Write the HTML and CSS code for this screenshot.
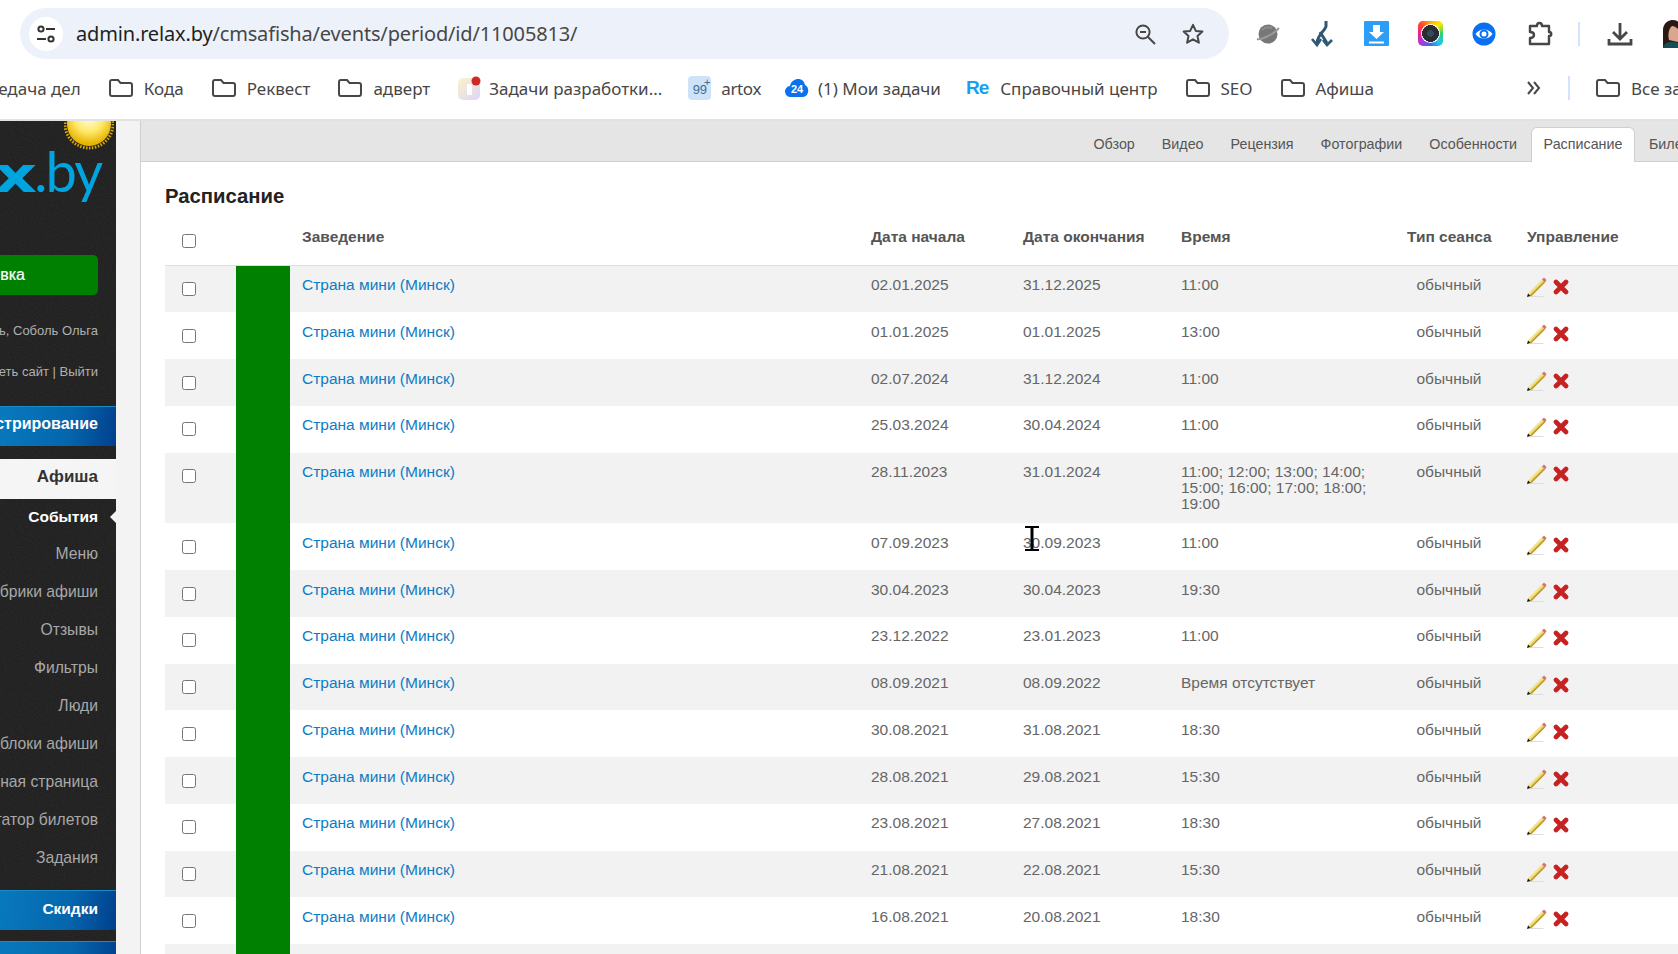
FILE: index.html
```html
<!DOCTYPE html>
<html lang="ru">
<head>
<meta charset="utf-8">
<title>Расписание</title>
<link rel="stylesheet" href="styles.css">
</head>
<body>
<header class="chrome">
  <div class="toolbar">
    <div class="omnibox">
      <span class="site-btn">
        <svg width="22" height="22" viewBox="0 0 22 22" fill="none" stroke="#333" stroke-width="2"><circle cx="6" cy="6" r="2.6"/><path d="M11 6h9M2 16h9"/><circle cx="16" cy="16" r="2.6"/></svg>
      </span>
      <span class="url"><b class="host">admin.relax.by</b>/cmsafisha/events/period/id/11005813/</span>
      <span class="omni-icons">
        <svg width="24" height="24" viewBox="0 0 24 24" fill="none" stroke="#474747" stroke-width="2"><circle cx="10" cy="10" r="6.6"/><path d="M7 10h6M15 15l7 7"/></svg>
        <svg width="24" height="24" viewBox="0 0 24 24" fill="none" stroke="#474747" stroke-width="2" stroke-linejoin="round"><path d="M12 2.8l2.8 6.1 6.6.7-4.9 4.5 1.4 6.6-5.9-3.4-5.9 3.4 1.4-6.6-4.9-4.500 6.6-.7z"/></svg>
      </span>
    </div>
    <div class="ext-list">
      <span class="ext"><svg width="26" height="26" viewBox="0 0 26 26"><circle cx="13" cy="13" r="9.5" fill="#777"/><path d="M2 18c4 1 16-4 22-11" fill="none" stroke="#999" stroke-width="2"/><path d="M7 9c3-3 7-3 10-2" fill="none" stroke="#8d8d8d" stroke-width="2"/></svg></span>
      <span class="ext"><svg width="26" height="28" viewBox="0 0 26 28" fill="none" stroke="#2f5873" stroke-width="3"><path d="M17 1v5c0 4-9 9-9 17"/><path d="M11 12l7 11"/><path d="M3 19l5 6 4-6M14 20l4 5 5-5" stroke-width="2.6"/></svg></span>
      <span class="ext"><svg width="25" height="25" viewBox="0 0 25 25"><rect width="25" height="25" rx="1" fill="#2e9df5"/><path d="M9 4h7v7h4l-7.500 7L5 11h4z" fill="#fff"/><path d="M5 20.500h15v2H5z" fill="#fff"/></svg></span>
      <span class="ext"><span class="camera"><span class="camera-lens"></span></span></span>
      <span class="ext"><svg width="24" height="24" viewBox="0 0 24 24"><circle cx="12" cy="12" r="11.500" fill="#0b6ff2"/><path d="M3.500 12c4-6 13-6 17 0-4 6-13 6-17 0z" fill="#fff"/><circle cx="12" cy="12" r="3.500" fill="none" stroke="#0b6ff2" stroke-width="2"/></svg></span>
      <span class="ext ext-puzzle"><svg width="26" height="26" viewBox="0 0 26 26" fill="none" stroke="#474747" stroke-width="2.400" stroke-linejoin="round"><path d="M3 5h7c0-4 5-4 5 0h7v6c3 0 3 4 0 4v8H3v-6c3 0 4-1.500 4-3s-1-3-4-3z"/></svg></span>
    </div>
    <span class="sep sep-toolbar"></span>
    <span class="dl"><svg width="26" height="26" viewBox="0 0 26 26" fill="none" stroke="#474747" stroke-width="2.800"><path d="M13 2v15M6 11l7 7 7-7"/><path d="M2 18v5h22v-5"/></svg></span>
    <span class="avatar"><svg width="15" height="28" viewBox="0 0 15 28"><path d="M0 28V9C1 2 6 0 10 0c3 0 5 1 5 2v26z" fill="#2b1a14"/><path d="M6 20c-1-4-1-11 3-14 2 0 4 1 6 3v13z" fill="#d9a78e"/><path d="M0 28c1-4 4-6 8-6 3 0 5 0 7 1v5z" fill="#174f58"/></svg></span>
  </div>
  <nav class="bookmarks">
    <span class="bm bm-first">Передача дел</span>
    <span class="bm"><svg class="folder" viewBox="0 0 24 18"><path d="M1 3a2 2 0 0 1 2-2h6l2.500 3H21a2 2 0 0 1 2 2v9a2 2 0 0 1-2 2H3a2 2 0 0 1-2-2z"/></svg>Кода</span>
    <span class="bm"><svg class="folder" viewBox="0 0 24 18"><path d="M1 3a2 2 0 0 1 2-2h6l2.500 3H21a2 2 0 0 1 2 2v9a2 2 0 0 1-2 2H3a2 2 0 0 1-2-2z"/></svg>Реквест</span>
    <span class="bm"><svg class="folder" viewBox="0 0 24 18"><path d="M1 3a2 2 0 0 1 2-2h6l2.500 3H21a2 2 0 0 1 2 2v9a2 2 0 0 1-2 2H3a2 2 0 0 1-2-2z"/></svg>адверт</span>
    <span class="bm"><svg class="fav" width="23" height="24" viewBox="0 0 23 24"><defs><linearGradient id="tg" x1="0" y1="0" x2="1" y2="1"><stop offset="0" stop-color="#fbf4c8"/><stop offset="1" stop-color="#dcd4fa"/></linearGradient></defs><rect y="2" width="22" height="22" rx="5" fill="url(#tg)"/><rect x="9" y="8" width="5" height="11" fill="#fff"/><circle cx="18" cy="5" r="4.500" fill="#cc2a22"/></svg>Задачи разработки...</span>
    <span class="bm"><span class="badge99">99<i class="plus">+</i></span><span class="latin">artox</span></span>
    <span class="bm"><svg class="fav-cloud" width="24" height="20" viewBox="0 0 24 20"><path d="M6 19a5.500 5.500 0 0 1-1-11C6 3 10 1 13 1c4 0 6 2 7 6 5 2 4 12-2 12z" fill="#0b72ee"/><text x="12" y="15" text-anchor="middle" class="fav-text">24</text></svg>(1) Мои задачи</span>
    <span class="bm"><span class="re">Re</span>Справочный центр</span>
    <span class="bm"><svg class="folder" viewBox="0 0 24 18"><path d="M1 3a2 2 0 0 1 2-2h6l2.500 3H21a2 2 0 0 1 2 2v9a2 2 0 0 1-2 2H3a2 2 0 0 1-2-2z"/></svg>SEO</span>
    <span class="bm"><svg class="folder" viewBox="0 0 24 18"><path d="M1 3a2 2 0 0 1 2-2h6l2.500 3H21a2 2 0 0 1 2 2v9a2 2 0 0 1-2 2H3a2 2 0 0 1-2-2z"/></svg>Афиша</span>
    <span class="bm-end">
      <svg class="chev" width="16" height="16" viewBox="0 0 16 16" fill="none" stroke="#474747" stroke-width="2"><path d="M2 2l5 6-5 6M8 2l5 6-5 6"/></svg>
      <span class="sep"></span>
      <span class="bm"><svg class="folder" viewBox="0 0 24 18"><path d="M1 3a2 2 0 0 1 2-2h6l2.500 3H21a2 2 0 0 1 2 2v9a2 2 0 0 1-2 2H3a2 2 0 0 1-2-2z"/></svg>Все закладки</span>
    </span>
  </nav>
</header>

<div class="page">
  <aside class="sidebar">
    <div class="logo">
      <svg class="sun" width="50" height="46" viewBox="0 0 50 46"><defs><radialGradient id="sg" cx=".5" cy=".35" r=".6"><stop offset="0" stop-color="#fffde0"/><stop offset=".55" stop-color="#ffe96a"/><stop offset="1" stop-color="#e8b400"/></radialGradient></defs><circle cx="25" cy="3" r="24" fill="none" stroke="#d9a800" stroke-width="3" stroke-dasharray="1.500 1.500"/><circle cx="25" cy="3" r="22" fill="url(#sg)"/></svg>
      <span class="logo-text"><b>relax</b>.by</span>
    </div>
    <div class="add-btn"><span>Заявка</span></div>
    <div class="user-line">Добрый день, Соболь Ольга</div>
    <div class="user-line user-line-2">Посмотреть сайт | Выйти</div>
    <div class="blue-bar">Администрирование</div>
    <div class="menu-head">Афиша</div>
    <ul class="menu">
      <li class="menu-active">События</li>
      <li>Меню</li>
      <li>Рубрики афиши</li>
      <li>Отзывы</li>
      <li>Фильтры</li>
      <li>Люди</li>
      <li>Подблоки афиши</li>
      <li>Главная страница</li>
      <li>Агрегатор билетов</li>
      <li>Задания</li>
    </ul>
    <div class="blue-bar blue-bar-discount">Скидки</div>
    <div class="blue-bar blue-bar-last"></div>
  </aside>
  <div class="gutter"></div>
  <main class="main">
    <nav class="tabs">
      <a class="tab">Обзор</a>
      <a class="tab">Видео</a>
      <a class="tab">Рецензия</a>
      <a class="tab">Фотографии</a>
      <a class="tab">Особенности</a>
      <a class="tab tab-active">Расписание</a>
      <a class="tab">Билеты</a>
    </nav>
    <h1 class="title">Расписание</h1>
    <table class="grid">
      <colgroup><col class="c-check"><col class="c-status"><col class="c-place"><col class="c-start"><col class="c-end"><col class="c-time"><col class="c-type"><col class="c-ctl"></colgroup>
      <thead>
        <tr><th class="cell-check"><input type="checkbox"></th><th></th><th class="pad">Заведение</th><th>Дата начала</th><th>Дата окончания</th><th>Время</th><th>Тип сеанса</th><th>Управление</th></tr>
      </thead>
      <tbody id="rows">
      <tr><td class="cell-check"><input type="checkbox"></td><td class="status"></td><td class="pad"><a class="link">Страна мини (Минск)</a></td><td>02.01.2025</td><td>31.12.2025</td><td>11:00</td><td class="type">обычный</td><td class="ctl"><svg class="ic-edit" viewBox="0 0 20 20"><use href="#pencil"/></svg><svg class="ic-del" viewBox="0 0 16 16"><use href="#cross"/></svg></td></tr>
      <tr><td class="cell-check"><input type="checkbox"></td><td class="status"></td><td class="pad"><a class="link">Страна мини (Минск)</a></td><td>01.01.2025</td><td>01.01.2025</td><td>13:00</td><td class="type">обычный</td><td class="ctl"><svg class="ic-edit" viewBox="0 0 20 20"><use href="#pencil"/></svg><svg class="ic-del" viewBox="0 0 16 16"><use href="#cross"/></svg></td></tr>
      <tr><td class="cell-check"><input type="checkbox"></td><td class="status"></td><td class="pad"><a class="link">Страна мини (Минск)</a></td><td>02.07.2024</td><td>31.12.2024</td><td>11:00</td><td class="type">обычный</td><td class="ctl"><svg class="ic-edit" viewBox="0 0 20 20"><use href="#pencil"/></svg><svg class="ic-del" viewBox="0 0 16 16"><use href="#cross"/></svg></td></tr>
      <tr><td class="cell-check"><input type="checkbox"></td><td class="status"></td><td class="pad"><a class="link">Страна мини (Минск)</a></td><td>25.03.2024</td><td>30.04.2024</td><td>11:00</td><td class="type">обычный</td><td class="ctl"><svg class="ic-edit" viewBox="0 0 20 20"><use href="#pencil"/></svg><svg class="ic-del" viewBox="0 0 16 16"><use href="#cross"/></svg></td></tr>
      <tr class="row-tall"><td class="cell-check"><input type="checkbox"></td><td class="status"></td><td class="pad"><a class="link">Страна мини (Минск)</a></td><td>28.11.2023</td><td>31.01.2024</td><td class="times">11:00; 12:00; 13:00; 14:00; 15:00; 16:00; 17:00; 18:00; 19:00</td><td class="type">обычный</td><td class="ctl"><svg class="ic-edit" viewBox="0 0 20 20"><use href="#pencil"/></svg><svg class="ic-del" viewBox="0 0 16 16"><use href="#cross"/></svg></td></tr>
      <tr><td class="cell-check"><input type="checkbox"></td><td class="status"></td><td class="pad"><a class="link">Страна мини (Минск)</a></td><td>07.09.2023</td><td class="cursor-cell">30.09.2023<svg class="ibeam" width="16" height="25" viewBox="0 0 16 25" fill="none" stroke="#000" stroke-width="2"><path d="M1 1h14M1 24h14"/><path d="M8 1v23" stroke-width="3"/></svg></td><td>11:00</td><td class="type">обычный</td><td class="ctl"><svg class="ic-edit" viewBox="0 0 20 20"><use href="#pencil"/></svg><svg class="ic-del" viewBox="0 0 16 16"><use href="#cross"/></svg></td></tr>
      <tr><td class="cell-check"><input type="checkbox"></td><td class="status"></td><td class="pad"><a class="link">Страна мини (Минск)</a></td><td>30.04.2023</td><td>30.04.2023</td><td>19:30</td><td class="type">обычный</td><td class="ctl"><svg class="ic-edit" viewBox="0 0 20 20"><use href="#pencil"/></svg><svg class="ic-del" viewBox="0 0 16 16"><use href="#cross"/></svg></td></tr>
      <tr><td class="cell-check"><input type="checkbox"></td><td class="status"></td><td class="pad"><a class="link">Страна мини (Минск)</a></td><td>23.12.2022</td><td>23.01.2023</td><td>11:00</td><td class="type">обычный</td><td class="ctl"><svg class="ic-edit" viewBox="0 0 20 20"><use href="#pencil"/></svg><svg class="ic-del" viewBox="0 0 16 16"><use href="#cross"/></svg></td></tr>
      <tr><td class="cell-check"><input type="checkbox"></td><td class="status"></td><td class="pad"><a class="link">Страна мини (Минск)</a></td><td>08.09.2021</td><td>08.09.2022</td><td>Время отсутствует</td><td class="type">обычный</td><td class="ctl"><svg class="ic-edit" viewBox="0 0 20 20"><use href="#pencil"/></svg><svg class="ic-del" viewBox="0 0 16 16"><use href="#cross"/></svg></td></tr>
      <tr><td class="cell-check"><input type="checkbox"></td><td class="status"></td><td class="pad"><a class="link">Страна мини (Минск)</a></td><td>30.08.2021</td><td>31.08.2021</td><td>18:30</td><td class="type">обычный</td><td class="ctl"><svg class="ic-edit" viewBox="0 0 20 20"><use href="#pencil"/></svg><svg class="ic-del" viewBox="0 0 16 16"><use href="#cross"/></svg></td></tr>
      <tr><td class="cell-check"><input type="checkbox"></td><td class="status"></td><td class="pad"><a class="link">Страна мини (Минск)</a></td><td>28.08.2021</td><td>29.08.2021</td><td>15:30</td><td class="type">обычный</td><td class="ctl"><svg class="ic-edit" viewBox="0 0 20 20"><use href="#pencil"/></svg><svg class="ic-del" viewBox="0 0 16 16"><use href="#cross"/></svg></td></tr>
      <tr><td class="cell-check"><input type="checkbox"></td><td class="status"></td><td class="pad"><a class="link">Страна мини (Минск)</a></td><td>23.08.2021</td><td>27.08.2021</td><td>18:30</td><td class="type">обычный</td><td class="ctl"><svg class="ic-edit" viewBox="0 0 20 20"><use href="#pencil"/></svg><svg class="ic-del" viewBox="0 0 16 16"><use href="#cross"/></svg></td></tr>
      <tr><td class="cell-check"><input type="checkbox"></td><td class="status"></td><td class="pad"><a class="link">Страна мини (Минск)</a></td><td>21.08.2021</td><td>22.08.2021</td><td>15:30</td><td class="type">обычный</td><td class="ctl"><svg class="ic-edit" viewBox="0 0 20 20"><use href="#pencil"/></svg><svg class="ic-del" viewBox="0 0 16 16"><use href="#cross"/></svg></td></tr>
      <tr><td class="cell-check"><input type="checkbox"></td><td class="status"></td><td class="pad"><a class="link">Страна мини (Минск)</a></td><td>16.08.2021</td><td>20.08.2021</td><td>18:30</td><td class="type">обычный</td><td class="ctl"><svg class="ic-edit" viewBox="0 0 20 20"><use href="#pencil"/></svg><svg class="ic-del" viewBox="0 0 16 16"><use href="#cross"/></svg></td></tr>
      <tr class="row-blank"><td></td><td class="status"></td><td colspan="6"></td></tr>
      </tbody>
    </table>
  </main>
</div>

<svg class="defs" width="0" height="0">
  <symbol id="pencil" viewBox="0 0 20 20">
    <path d="M3.500 19.500h13" stroke="#ddd" stroke-width="1" fill="none"/>
    <path d="M1 16.500L15 2.500l3 3L4 19.500z" fill="#e9cf5c"/>
    <path d="M1 16.500L15 2.500l1.200 1.200-14 14z" fill="#f4e698"/>
    <path d="M3 18.500L17 4.500l1 1L4 19.500z" fill="#b89a2c"/>
    <path d="M15 2.500l2-2 2.500 2.500-1.500 2.500z" fill="#d8706a"/>
    <path d="M0 20l1-3.500L3.500 19z" fill="#111"/>
  </symbol>
  <symbol id="cross" viewBox="0 0 16 16">
    <path d="M3 3l10 10M13 3L3 13" fill="none" stroke="#c62222" stroke-width="4.600" stroke-linecap="round"/>
  </symbol>
</svg>
</body>
</html>
```
FILE: styles.css
```css
* { box-sizing: border-box; }
html, body { margin: 0; padding: 0; height: 100%; }
body {
  width: 1678px;
  height: 954px;
  overflow: hidden;
  background: #fff;
  font-family: "Liberation Sans", Arial, sans-serif;
  display: flex;
  flex-direction: column;
}
.defs { position: absolute; }

/* browser chrome */
.chrome {
  flex: none;
  height: 121px;
  background: #fff;
  border-bottom: 2px solid #e2e2e2;
  overflow: hidden;
  font-family: "Noto Sans", sans-serif;
}
.toolbar {
  height: 60px;
  padding: 8px 0 1px 20px;
  display: flex;
  align-items: center;
  overflow: hidden;
}
.omnibox {
  flex: none;
  width: 1209px;
  height: 51px;
  border-radius: 26px;
  background: #edf2fa;
  display: flex;
  align-items: center;
  padding: 0 24px 0 9px;
}
.site-btn {
  width: 34px;
  height: 34px;
  border-radius: 50%;
  background: #fff;
  display: flex;
  align-items: center;
  justify-content: center;
  margin-right: 13px;
}
.url { font-size: 20px; color: #474747; white-space: nowrap; letter-spacing: -0.16px; }
.host { font-weight: 400; color: #1f1f1f; }
.omni-icons { margin-left: auto; display: flex; gap: 24px; }
.ext-list { display: flex; flex: none; margin-left: 12px; }
.ext {
  width: 54px;
  height: 30px;
  display: flex;
  align-items: center;
  justify-content: center;
}
.ext-puzzle { padding-left: 3px; }
.camera {
  width: 25px;
  height: 25px;
  border-radius: 5px;
  background: conic-gradient(#ffb000, #ffe600, #28d26a, #20c8e8, #3a6cf0, #a83be0, #f0208a, #ff4a2a, #ffb000);
  display: flex;
  align-items: center;
  justify-content: center;
}
.camera-lens {
  width: 19px;
  height: 19px;
  border-radius: 50%;
  background: radial-gradient(circle, #2f4b5e 0 25%, #2a2d33 26% 62%, #fff 64%);
}
.sep { width: 2px; height: 24px; background: #d3e3fd; flex: none; }
.sep-toolbar { margin-left: 13px; }
.dl { width: 26px; flex: none; margin-left: 27px; display: flex; }
.avatar { margin-left: 30px; display: flex; width: 15px; overflow: hidden; flex: none; }

.bookmarks {
  height: 59px;
  padding-bottom: 3px;
  display: flex;
  align-items: center;
  gap: 28px;
  font-size: 17px;
  color: #474747;
  white-space: nowrap;
  overflow: hidden;
}
.bm { display: flex; align-items: center; gap: 11px; flex: none; }
.bm-first { margin-left: -34px; }
.latin { letter-spacing: -0.4px; }
.folder { width: 24px; height: 18px; fill: none; stroke: #474747; stroke-width: 2; overflow: visible; flex: none; }
.fav { flex: none; margin-right: -3px; }
.fav-cloud { flex: none; margin: 0 -2px 0 -4px; }
.fav-text { font: 700 11px "Liberation Sans", sans-serif; fill: #fff; }
.badge99 {
  flex: none;
  width: 23px;
  height: 24px;
  margin: 0 -1px 0 -2px;
  border-radius: 4px;
  background: #cfe3f8;
  color: #3b6e96;
  font: 13px/28px "Liberation Sans", sans-serif;
  text-align: center;
  position: relative;
}
.plus { position: absolute; top: -8px; right: 1px; font-style: normal; font-size: 11px; }
.re { flex: none; margin: 0 1px 0 -3px; font: 700 19px "Liberation Sans", sans-serif; color: #18a0ee; letter-spacing: -1px; }
.bm-end {
  margin-left: auto;
  flex: none;
  width: 152px;
  display: flex;
  align-items: center;
  overflow: hidden;
}
.chev { flex: none; margin-right: 26px; }
.bm-end .sep { margin-right: 26px; }

/* layout */
.page { flex: 1; min-height: 0; display: flex; }
.sidebar {
  flex: none;
  width: 116px;
  background-color: #1c1c1c;
  background-image: url("data:image/svg+xml,%3Csvg xmlns='http://www.w3.org/2000/svg' width='200' height='200'%3E%3Cfilter id='n'%3E%3CfeTurbulence type='fractalNoise' baseFrequency='.9' numOctaves='2'/%3E%3CfeColorMatrix values='0 0 0 0 1 0 0 0 0 1 0 0 0 0 1 0 0 0 .07 0'/%3E%3C/filter%3E%3Crect width='200' height='200' filter='url(%23n)'/%3E%3C/svg%3E");
  overflow: hidden;
  color: #a8a8a8;
  font-size: 15.700px;
  display: flex;
  flex-direction: column;
}
.gutter {
  flex: none;
  width: 25px;
  background: #f3f3f3;
  border-right: 1px solid #cfcfcf;
}
.main { flex: 1; min-width: 0; overflow: hidden; }

/* sidebar */
.logo {
  flex: none;
  height: 134px;
  position: relative;
  display: flex;
  justify-content: flex-end;
  padding: 20px 15px 0 0;
}
.sun { position: absolute; top: 0; left: 64px; }
.logo-text {
  font-family: Lato, sans-serif;
  font-weight: 400;
  font-size: 56px;
  line-height: 60px;
  height: 60px;
  letter-spacing: -2px;
  color: #00a5df;
  white-space: nowrap;
}
.logo-text b {
  display: inline-block;
  font-family: "DejaVu Sans", sans-serif;
  font-weight: 700;
  font-size: 50px;
  transform: scaleX(1.35);
  transform-origin: 100% 50%;
}
.add-btn {
  flex: none;
  height: 40px;
  width: 98px;
  background: #008000;
  border-radius: 0 5px 5px 0;
  color: #fff;
  font-size: 16px;
  display: flex;
  align-items: center;
  justify-content: flex-end;
  padding-right: 73px;
  white-space: nowrap;
  -webkit-text-stroke: .2px #fff;
}
.user-line {
  flex: none;
  margin-top: 28px;
  height: 16px;
  padding-right: 18px;
  font-size: 13px;
  line-height: 16px;
  color: #b0b0b0;
  white-space: nowrap;
  display: flex;
  justify-content: flex-end;
}
.user-line-2 { margin-top: 25px; font-weight: 400; }
.blue-bar {
  flex: none;
  height: 40px;
  margin-top: 26px;
  padding-right: 18px;
  background: linear-gradient(100deg, #0879bd 0%, #0566ad 60%, #013f8c 100%);
  border-top: 1px solid #1b8ac8;
  color: #fff;
  font-size: 16px;
  font-weight: 700;
  line-height: 33px;
  white-space: nowrap;
  display: flex;
  justify-content: flex-end;
}
.menu-head {
  flex: none;
  height: 40px;
  margin-top: 13px;
  padding-right: 18px;
  background: #f5f5f5;
  color: #333;
  font-size: 17px;
  font-weight: 700;
  line-height: 35px;
  text-align: right;
}
.menu { flex: none; list-style: none; margin: -1px 0 0; padding: 0; }
.menu li {
  height: 38px;
  padding-right: 18px;
  line-height: 38px;
  white-space: nowrap;
  display: flex;
  justify-content: flex-end;
}
.menu .menu-active { color: #fff; font-size: 15.500px; font-weight: 700; position: relative; height: 37px; }
.menu-active::after {
  content: "";
  position: absolute;
  right: 0;
  top: 13px;
  border: 6px solid transparent;
  border-right-color: #f3f3f3;
}
.blue-bar-discount { margin-top: 13px; font-size: 15.500px; line-height: 35px; }
.blue-bar-last { margin-top: 11px; }

/* tabs */
.tabs {
  height: 41px;
  background: #e5e5e5;
  border-bottom: 1px solid #cfcfcf;
  display: flex;
  align-items: flex-end;
  padding-left: 939px;
  font-size: 14.300px;
  color: #555;
  white-space: nowrap;
}
.tab {
  flex: none;
  height: 35px;
  padding: 0 12.500px;
  line-height: 33px;
  margin-bottom: -1px;
  border: 1px solid transparent;
  border-bottom: 0;
}
.tab-active {
  background: #fff;
  border-color: #cfcfcf;
  border-radius: 6px 6px 0 0;
  padding: 0 12px;
}

/* table */
.title {
  margin: 22px 0 9px 24px;
  font-size: 20.300px;
  line-height: 24px;
  font-weight: 700;
  color: #222;
}
.grid {
  margin-left: 24px;
  width: 1513px;
  table-layout: fixed;
  border-collapse: separate;
  border-spacing: 0;
  font-size: 15.500px;
  line-height: 15.700px;
  color: #666;
}
.c-check { width: 71px; }
.c-status { width: 54px; }
.c-place { width: 569px; }
.c-start { width: 152px; }
.c-end { width: 158px; }
.c-time { width: 226px; }
.c-type { width: 120px; }
.c-ctl { width: 163px; }
.grid th {
  height: 48.600px;
  padding: 12px 0 0 12px;
  text-align: left;
  vertical-align: top;
  font-weight: 700;
  color: #555;
  border-bottom: 1px solid #ddd;
}
.grid td {
  height: 46.780px;
  padding: 11.500px 0 0 12px;
  vertical-align: top;
}
.grid .cell-check { padding: 17px 0 0 17px; }
.grid td.cell-check { padding-top: 16.500px; }
.grid input { display: block; margin: 0; width: 14px; height: 14px; }
tbody tr:nth-child(odd) td { background: #f2f2f2; }
.grid td.status, tbody tr:nth-child(odd) td.status { background: #008000; padding: 0; }
.grid .pad { padding-left: 12px; }
.link { color: #0b7cc4; }
.grid td.type { padding: 11.500px 12px 0 0; text-align: center; }
.grid td.times { padding: 11.500px 12px 12px 12px; }
.grid td.ctl { padding: 11.500px 0 0 12px; }
.ic-edit { display: inline-block; width: 20px; height: 20px; vertical-align: top; }
.ic-del { display: inline-block; width: 16px; height: 16px; margin: 2px 0 0 6px; vertical-align: top; }
.row-blank td { height: 30px; }
.cursor-cell { position: relative; }
.grid .ibeam { position: absolute; left: 13px; top: 3px; }
```
